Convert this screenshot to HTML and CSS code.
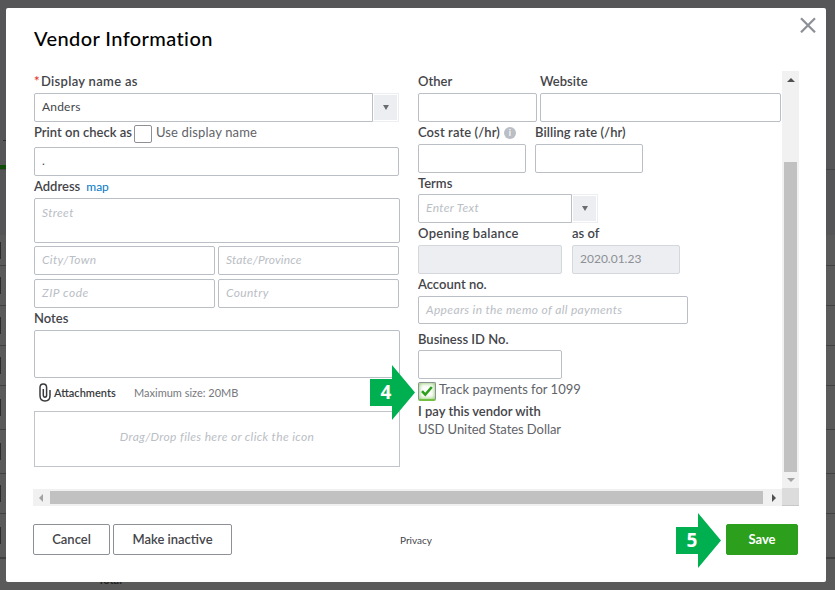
FILE: index.html
```
<!DOCTYPE html>
<html lang="en">
<head>
    <meta charset="UTF-8">
    <meta name="viewport" content="width=device-width, initial-scale=1.0">
    <title>Vendor Information</title>
    <link rel="stylesheet" href="styles.css">
</head>
<body>

    <!-- dimmed list page behind the dialog -->
    <div class="page">
        <div class="page-top"><span class="dash"></span></div>
        <div class="page-tab"><span class="green"></span></div>
        <div class="page-head"></div>
        <div class="page-row first"><span class="check"></span></div>
        <div class="page-row"><span class="check"></span></div>
        <div class="page-row"><span class="check"></span></div>
        <div class="page-row"><span class="check"></span></div>
        <div class="page-row tall"><span class="check"></span></div>
        <div class="page-row tall"><span class="check"></span></div>
        <div class="page-row"><span class="check"></span></div>
        <div class="page-row last"><span class="check"></span></div>
        <div class="page-total">Total</div>
    </div>

    <div class="modal">
        <div class="header">
            <h1>Vendor Information</h1>
            <svg class="close" width="16" height="16" viewBox="0 0 16 16"><path d="M1 1.3L15 15.3M15 1.3L1 15.3" stroke="#8d9096" stroke-width="2.2" fill="none"/></svg>
        </div>

        <div class="scroll-area">
            <div class="form">
                <div class="col-left">
                    <div class="label"><span class="required">*</span><span class="wide">Display name as</span></div>
                    <div class="select">
                        <div class="input select-input">Anders</div>
                        <div class="select-button"><span class="arrow-down"></span></div>
                    </div>
                    <div class="label label-check">
                        <span>Print on check as</span>
                        <span class="checkbox"></span>
                        <span class="light use-name">Use display name</span>
                    </div>
                    <div class="input w-365">.</div>
                    <div class="label label-address"><span>Address</span> <a class="map">map</a></div>
                    <div class="input placeholder street">Street</div>
                    <div class="row address-row">
                        <div class="input placeholder w-181">City/Town</div>
                        <div class="input placeholder w-181 narrow">State/Province</div>
                    </div>
                    <div class="row address-row second">
                        <div class="input placeholder w-181 zip">ZIP code</div>
                        <div class="input placeholder w-181">Country</div>
                    </div>
                    <div class="label">Notes</div>
                    <div class="input notes"></div>
                    <div class="attachments">
                        <svg class="clip" width="12" height="19" viewBox="0 0 12 19"><path d="M1 4.5V12.5C1 16.2 2.8 18 6 18S11 16.2 11 12.5V7M1 4.5C1 2.2 2.2 1 4.3 1S7.6 2.2 7.6 4.5V12.3C7.6 14.8 4.3 14.8 4.3 12.3V6" stroke="#393a3d" stroke-width="1.5" fill="none"/></svg>
                        <span class="attach-title">Attachments</span>
                        <span class="attach-size">Maximum size: 20MB</span>
                    </div>
                    <div class="drop-zone">Drag/Drop files here or click the icon</div>
                </div>

                <div class="col-right">
                    <div class="row label">
                        <span class="w-122">Other</span>
                        <span>Website</span>
                    </div>
                    <div class="row">
                        <div class="input w-119"></div>
                        <div class="input w-241"></div>
                    </div>
                    <div class="row label">
                        <span class="cost-label"><span class="cost">Cost rate (/hr)</span><span class="info">i</span></span>
                        <span class="billing">Billing rate (/hr)</span>
                    </div>
                    <div class="row gap-9">
                        <div class="input w-108"></div>
                        <div class="input w-108"></div>
                    </div>
                    <div class="label label-terms">Terms</div>
                    <div class="select">
                        <div class="input placeholder terms">Enter Text</div>
                        <div class="select-button"><span class="arrow-down"></span></div>
                    </div>
                    <div class="row label">
                        <span class="w-154 wide">Opening balance</span>
                        <span>as of</span>
                    </div>
                    <div class="row gap-10">
                        <div class="input disabled w-144"></div>
                        <div class="input disabled w-108">2020.01.23</div>
                    </div>
                    <div class="label">Account no.</div>
                    <div class="input placeholder account">Appears in the memo of all payments</div>
                    <div class="label label-business">Business ID No.</div>
                    <div class="input w-144"></div>
                    <div class="track">
                        <span class="checkbox checked">
                            <svg width="14" height="14" viewBox="0 0 14 14"><path d="M2 7.2L5.3 10.6L11.8 3" stroke="#2ca01c" stroke-width="2.6" fill="none"/></svg>
                        </span>
                        <span class="light">Track payments for 1099</span>
                        <div class="callout callout-track">
                            <svg width="45" height="55" viewBox="0 0 45 55"><path d="M0 14H22V0L45 27.5L22 55V41H0Z" fill="#00b050"/></svg>
                            <span>4</span>
                        </div>
                    </div>
                    <div class="pay">I pay this vendor with</div>
                    <div class="pay light currency">USD United States Dollar</div>
                </div>
            </div>

            <div class="v-scroll">
                <span class="tri tri-up"></span>
                <span class="v-thumb"></span>
                <span class="tri tri-down"></span>
            </div>
            <div class="h-scroll">
                <span class="tri tri-left"></span>
                <span class="h-thumb"></span>
                <span class="tri tri-right"></span>
            </div>
            <div class="corner"></div>
        </div>

        <div class="footer">
            <button class="button cancel">Cancel</button>
            <button class="button inactive">Make inactive</button>
            <a class="privacy">Privacy</a>
            <button class="button save">Save</button>
            <div class="callout callout-save">
                <svg width="45" height="55" viewBox="0 0 45 55"><path d="M0 14H22V0L45 27.5L22 55V41H0Z" fill="#00b050"/></svg>
                <span>5</span>
            </div>
        </div>
    </div>

</body>
</html>
```
FILE: styles.css
```
* {
    margin: 0;
    padding: 0;
    box-sizing: border-box;
}

body {
    width: 835px;
    height: 590px;
    overflow: hidden;
    position: relative;
    background: #5a5a5a;
    font-family: Lato, 'Liberation Sans', sans-serif;
    color: #44454a;
    font-size: 13px;
    padding: 8px 9px 8px 6px;
}

.page {
    position: absolute;
    top: 0;
    left: 0;
    width: 835px;
    height: 590px;
}

.page-top {
    height: 165px;
    background: #565658;
    padding-top: 140px;
}

.dash {
    display: block;
    width: 3px;
    height: 1px;
    margin-left: 3px;
    background: #2c2c2d;
}

.page-tab {
    height: 5px;
    background: #565658;
    border-bottom: 1px solid #454546;
}

.green {
    display: block;
    width: 6px;
    height: 4px;
    background: #0f4d08;
}

.page-head {
    height: 65px;
    background: #555558;
}

.page-row {
    height: 40px;
    border-bottom: 1px solid #414142;
    display: flex;
    align-items: center;
}

.page-row.first {
    height: 31px;
}

.page-row.tall {
    height: 44px;
}

.page-row.last {
    height: 45px;
    border-bottom-width: 2px;
}

.check {
    width: 1px;
    height: 17px;
    background: #2c2c2d;
}

.page-total {
    padding: 13px 0 0 98px;
    font-size: 11px;
    line-height: 15px;
    font-weight: bold;
    color: #222;
}

.modal {
    position: relative;
    width: 820px;
    height: 574px;
    background: #fff;
    border-radius: 2px;
    padding: 0 27px;
}

.header {
    height: 63px;
    display: flex;
    justify-content: space-between;
    padding: 16px 0 0 1px;
}

.header h1 {
    font-size: 20px;
    line-height: 28px;
    font-weight: 500;
    color: #000;
    letter-spacing: 0.4px;
}

.close {
    margin: -7px -17px 0 0;
}

.scroll-area {
    display: grid;
    grid-template-columns: 749px 17px;
    grid-template-rows: 417px 18px;
}

.form {
    display: flex;
    padding-left: 1px;
}

.col-left {
    width: 384px;
}

.col-right {
    width: 364px;
}

.row {
    display: flex;
    gap: 3px;
}

.gap-9 {
    gap: 9px;
}

.gap-10 {
    gap: 10px;
}

.label {
    height: 22px;
    line-height: 20px;
    font-weight: 600;
    white-space: nowrap;
    gap: 0;
}

.label-terms {
    height: 21px;
}

.wide {
    letter-spacing: 0.3px;
}

.light {
    font-weight: 400;
    color: #626369;
}

.required {
    color: #e43834;
    display: inline-block;
    width: 7px;
}

.input {
    height: 29px;
    line-height: 26px;
    border: 1px solid #babec5;
    border-radius: 2px;
    background: #fff;
    padding: 0 7px;
    font-size: 12px;
    white-space: nowrap;
}

.placeholder {
    color: #babec5;
    font-style: italic;
    letter-spacing: 0.35px;
}

.placeholder.narrow {
    letter-spacing: 0.15px;
}

.placeholder.zip {
    letter-spacing: 0.5px;
}

.disabled {
    background: #eceef1;
    border-color: #d4d7dc;
    color: #8d9096;
}

.w-108 { width: 108px; }
.w-119 { width: 119px; }
.w-122 { width: 122px; }
.w-144 { width: 144px; }
.w-154 { width: 154px; }
.w-181 { width: 181px; }
.w-241 { width: 241px; }
.w-365 { width: 365px; }

.select {
    display: flex;
}

.select-input {
    width: 339px;
    border-radius: 2px 0 0 2px;
    letter-spacing: 0.2px;
}

.select-button {
    width: 26px;
    height: 29px;
    border: 1px solid #eceef1;
    border-left: 0;
    background: #eceef1;
    box-shadow: inset 0 0 0 1px #fff;
    display: flex;
    align-items: center;
    justify-content: center;
}

.arrow-down {
    border: 3.5px solid transparent;
    border-top: 5px solid #6b6c72;
    border-bottom: 0;
}

.label-check {
    height: 25px;
    display: flex;
}

.checkbox {
    width: 18px;
    height: 18px;
    border: 1px solid #8d9096;
    border-radius: 2px;
    margin: 3px 4px 0 2px;
    flex: none;
}

.use-name {
    letter-spacing: 0.15px;
}

.label-address {
    display: flex;
}

.map {
    color: #0077c5;
    font-size: 12px;
    line-height: 22px;
    font-weight: 400;
    margin-left: 6px;
}

.street {
    width: 366px;
    height: 45px;
    line-height: 28px;
}

.address-row {
    margin-top: 3px;
}

.address-row.second {
    margin-top: 4px;
}

.notes {
    width: 366px;
    height: 48px;
}

.attachments {
    height: 33px;
    display: flex;
    line-height: 29px;
    font-size: 11px;
}

.clip {
    margin: 5px 3px 0 5px;
}

.attach-title {
    font-weight: 600;
    width: 80px;
    color: #393a3d;
}

.attach-size {
    color: #77787e;
}

.drop-zone {
    width: 366px;
    height: 56px;
    border: 1px solid #c1c4c9;
    line-height: 50px;
    text-align: center;
    font-size: 12px;
    font-style: italic;
    letter-spacing: 0.34px;
    color: #babec5;
}

.cost-label {
    width: 117px;
    display: flex;
}

.cost {
    letter-spacing: 0.1px;
}

.billing {
    letter-spacing: 0.08px;
}

.info {
    width: 12px;
    height: 12px;
    margin: 5px 0 0 4px;
    border-radius: 50%;
    background: #babec5;
    color: #fff;
    font-size: 9px;
    line-height: 12px;
    text-align: center;
}

.terms {
    width: 154px;
    border-radius: 2px 0 0 2px;
}

.account {
    width: 270px;
    height: 28px;
}

.label-business {
    height: 26px;
    line-height: 30px;
}

.track {
    position: relative;
    height: 24px;
    line-height: 20px;
    display: flex;
    white-space: nowrap;
}

.checkbox.checked {
    margin: 3px 3px 0 0;
    height: 19px;
    border-bottom: 2px solid #72c043;
    box-shadow: inset 0 0 4px #72c043;
    display: flex;
    align-items: center;
    justify-content: center;
}

.pay {
    height: 18px;
    line-height: 16px;
    font-weight: 600;
    white-space: nowrap;
}

.pay.light {
    font-weight: 400;
}

.currency {
    letter-spacing: -0.06px;
}

.v-scroll {
    background: #f1f1f1;
    display: flex;
    flex-direction: column;
    align-items: center;
}

.v-thumb {
    width: 13px;
    height: 310px;
    margin: 80px 0 6px;
    background: #c1c1c1;
}

.h-scroll {
    height: 17px;
    margin-top: 1px;
    background: #f1f1f1;
    display: flex;
    align-items: center;
}

.h-thumb {
    width: 713px;
    height: 13px;
    margin: 0 9px 0 7px;
    background: #c1c1c1;
}

.corner {
    background: #dcdcdc;
    border-bottom: 1px solid #c8c8c8;
}

.tri {
    border: 4px solid transparent;
}

.tri-up {
    border-bottom-color: #505050;
    border-top: 0;
    margin-top: 7px;
}

.tri-down {
    border-top-color: #a3a3a3;
    border-bottom: 0;
}

.tri-left {
    border-right-color: #a3a3a3;
    border-left: 0;
    margin-left: 6px;
}

.tri-right {
    border-left-color: #505050;
    border-right: 0;
}

.footer {
    position: relative;
    display: flex;
    align-items: center;
    margin-top: 18px;
    height: 31px;
}

.button {
    height: 31px;
    border: 1px solid #8d9096;
    border-radius: 2px;
    background: #fff;
    font-family: inherit;
    font-size: 13px;
    font-weight: 600;
    color: #44454a;
    white-space: nowrap;
    padding-bottom: 2px;
}

.cancel {
    width: 77px;
    margin-right: 3px;
}

.inactive {
    width: 119px;
}

.privacy {
    font-size: 10px;
    margin-left: 168px;
    padding-top: 1px;
}

.save {
    width: 72px;
    margin-left: auto;
    margin-right: 1px;
    border-color: #2ca01c;
    background: #2ca01c;
    color: #fff;
    font-weight: 700;
}

/* numbered step arrows, drawn over the dialog */
.callout {
    position: absolute;
    width: 45px;
    height: 55px;
}

.callout svg {
    display: block;
}

.callout span {
    position: absolute;
    left: 0;
    top: 14px;
    width: 32px;
    line-height: 27px;
    text-align: center;
    font-family: 'Open Sans', sans-serif;
    font-size: 19px;
    font-weight: 700;
    color: #fff;
}

.callout-track {
    left: -48px;
    top: -14px;
}

.callout-save {
    left: 643px;
    top: -11px;
}
```
